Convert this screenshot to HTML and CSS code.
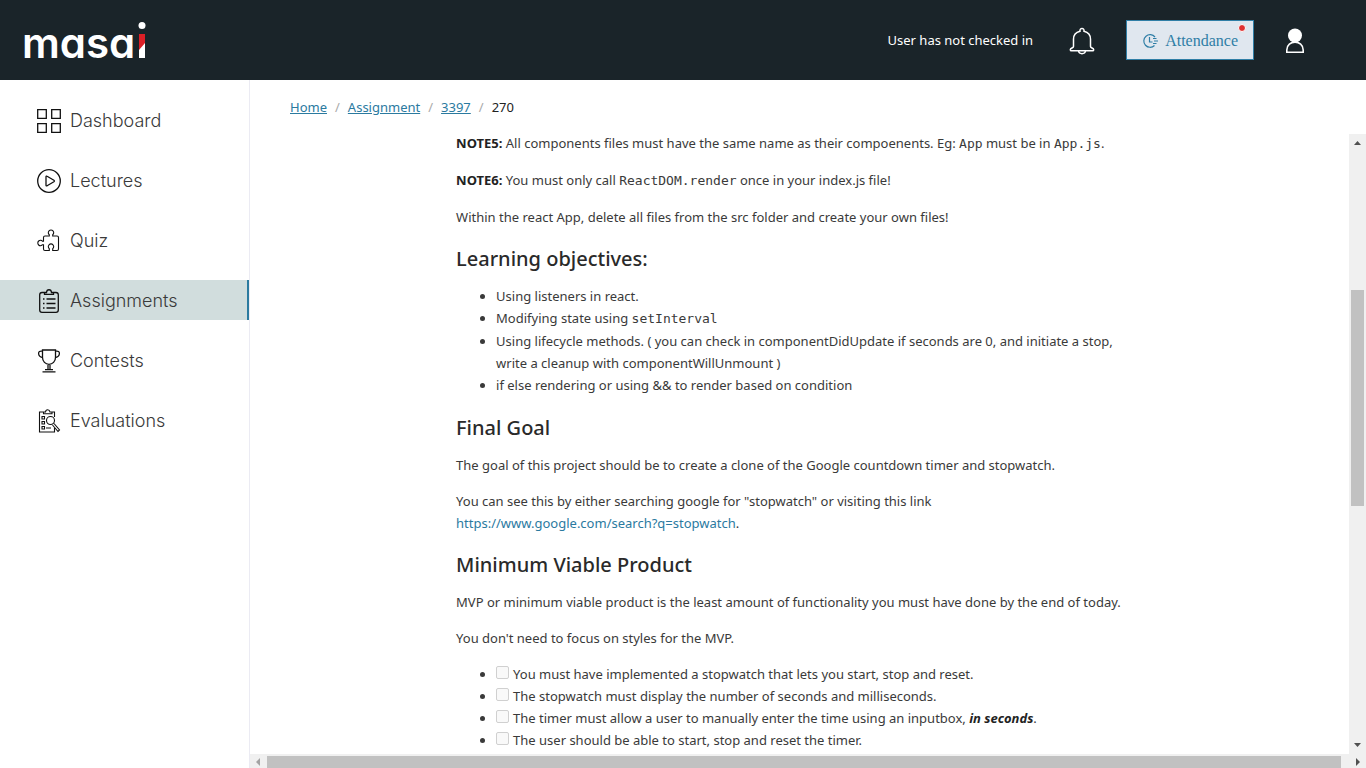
FILE: index.html
```html
<!DOCTYPE html>
<html lang="en">
<head>
<meta charset="utf-8">
<meta name="viewport" content="width=device-width, initial-scale=1">
<title>Masai - Assignment 270</title>
<link rel="stylesheet" href="styles.css">
</head>
<body class="app">
<header class="topbar">
  <a class="logo" href="#" aria-label="masai home">
    <svg width="128" height="56" viewBox="-4 -9 128 56">
      <text class="logo-text" x="-2" y="37">masa</text>
      <circle cx="118" cy="4.500" r="3.500" fill="#fff"/>
      <path d="M115 13h6v24h-6z" fill="#fff"/>
      <path d="M115 13h6v9l-6 7z" fill="#dc1f26"/>
    </svg>
  </a>
  <div class="tools">
    <span class="status">User has not checked in</span>
    <button class="icon-button bell" type="button" aria-label="Notifications">
      <svg width="26" height="28" viewBox="0 0 26 28" fill="none" stroke="#fff" stroke-width="1.500">
        <path d="M11 4.200C10.300.500 15.700.500 15 4.200c4.500 1 6.500 4.300 6.500 8v7.300c0 1.500 3.200 1.500 3.200 3.200 0 .700-.300 1.100-1.100 1.100H2.400c-.800 0-1.100-.400-1.100-1.100 0-1.700 3.200-1.700 3.200-3.200v-7.300c0-3.700 2-7 6.500-8z"/>
        <path d="M9.500 24c.600 3.600 6.400 3.600 7 0"/>
      </svg>
    </button>
    <button class="attendance" type="button">
      <svg width="16" height="16" viewBox="0 0 16 16" fill="none" stroke="#2f7ea6" stroke-width="1.200">
        <path d="M13 4A6.300 6.300 0 1 0 12.500 12.500M7.500 4v5h3M11 5.500h3.500M12 8h4M11 10.500h3.500"/>
      </svg>
      <span>Attendance</span>
      <span class="dot"></span>
    </button>
    <button class="icon-button user" type="button" aria-label="Profile">
      <svg width="20" height="26" viewBox="0 0 20 26">
        <path d="M1.800 24.200V22C1.800 11.500 18.200 11.500 18.200 22v2.200z" fill="none" stroke="#fff" stroke-width="1.600"/>
        <circle cx="10" cy="7.500" r="7" fill="#fff"/>
      </svg>
    </button>
  </div>
</header>
<div class="layout">
  <nav class="sidebar" aria-label="Main">
    <a class="nav-item" href="#"><svg class="nav-icon" viewBox="0 0 24 24"><path d="M.700.700h8.600v8.600H.700zM14.700.700h8.600v8.600h-8.600zM.700 14.700h8.600v8.600H.700zM14.700 14.700h8.600v8.600h-8.600z"/></svg>Dashboard</a>
    <a class="nav-item" href="#"><svg class="nav-icon" viewBox="0 0 24 24"><circle cx="12" cy="12" r="11.300"/><path d="M9 7.800v8.400c0 .700.500.900 1.100.600l6.800-4c.600-.400.600-1.100 0-1.500l-6.800-4c-.600-.400-1.100-.100-1.100.500z"/></svg>Lectures</a>
    <a class="nav-item" href="#"><svg class="nav-icon fine" viewBox="0 0 24 24"><path d="M8 7h4.300V5.800a2.700 2.700 0 1 1 3.400 0V7H20q1.500 0 1.500 1.500V20q0 1.500-1.500 1.500h-4.300v-1.800a2.700 2.700 0 1 0-3.400 0v1.800H8q-1.500 0-1.500-1.500v-4.300H5.600a2.700 2.700 0 1 1 0-3.400h.9V8.500Q6.500 7 8 7z"/></svg>Quiz</a>
    <a class="nav-item active" href="#" aria-current="page"><svg class="nav-icon" viewBox="0 0 24 24"><path d="M7.500 3.500H5Q2.700 3.500 2.700 5.800V21q0 2.300 2.300 2.300h14q2.300 0 2.300-2.300V5.800q0-2.300-2.300-2.300h-2.500M7.500 3.500v1.800h9V3.500h-2c-.300-3.700-4.700-3.700-5 0zM9.500 10h9M9.500 14.500h9M9.500 19h9M6 10h1.500M6 14.500h1.500M6 19h1.500"/></svg>Assignments</a>
    <a class="nav-item" href="#"><svg class="nav-icon" viewBox="0 0 24 24"><path d="M5.500 1h13v7.500c0 4-3 6.800-6.500 6.800s-6.500-2.800-6.500-6.800zM5.500 2.200C0 1 .600 7.500 5.500 8.500M18.500 2.200C24 1 23.400 7.500 18.500 8.500M11 15.200v5.300M13 15.200v5.300M8 20.600h8M5.500 22.800h13"/></svg>Contests</a>
    <a class="nav-item" href="#"><svg class="nav-icon fine" viewBox="0 0 24 24"><path d="M7 3H2.500v20h15v-4M14 3h3.500v5M6.500 4.800V3h2c.300-3 4-3 4.500 0h2v1.800zM5 7.500h2.500V10H5zM5 12.500h2.500V15H5zM5 17.500h2.500V20H5zM9 19h5M17 14.500l5.500 6.500-1.500 1.500-5.500-6.500"/><circle cx="13.500" cy="11.500" r="4"/></svg>Evaluations</a>
  </nav>
  <main class="main">
    <nav class="crumbs" aria-label="Breadcrumb">
      <a href="#">Home</a><span class="sep">/</span><a href="#">Assignment</a><span class="sep">/</span><a href="#">3397</a><span class="sep">/</span><span>270</span>
    </nav>
    <div class="viewport">
      <div class="pane">
        <article class="article">
          <p><strong>NOTE5:</strong> All components files must have the same name as their compoenents. Eg: <code>App</code> must be in <code>App.js</code>.</p>
          <p><strong>NOTE6:</strong> You must only call <code>ReactDOM.render</code> once in your index.js file!</p>
          <p>Within the react App, delete all files from the src folder and create your own files!</p>
          <h2>Learning objectives:</h2>
          <ul>
            <li>Using listeners in react.</li>
            <li>Modifying state using <code>setInterval</code></li>
            <li>Using lifecycle methods. ( you can check in componentDidUpdate if seconds are 0, and initiate a stop,<br>write a cleanup with componentWillUnmount )</li>
            <li>if else rendering or using &amp;&amp; to render based on condition</li>
          </ul>
          <h2>Final Goal</h2>
          <p>The goal of this project should be to create a clone of the Google countdown timer and stopwatch.</p>
          <p>You can see this by either searching google for "stopwatch" or visiting this link<br><a href="#">https://www.google.com/search?q=stopwatch</a>.</p>
          <h2>Minimum Viable Product</h2>
          <p>MVP or minimum viable product is the least amount of functionality you must have done by the end of today.</p>
          <p>You don't need to focus on styles for the MVP.</p>
          <ul>
            <li><input class="check" id="t1" type="checkbox" disabled><label for="t1">You must have implemented a stopwatch that lets you start, stop and reset.</label></li>
            <li><input class="check" id="t2" type="checkbox" disabled><label for="t2">The stopwatch must display the number of seconds and milliseconds.</label></li>
            <li><input class="check" id="t3" type="checkbox" disabled><label for="t3">The timer must allow a user to manually enter the time using an inputbox, <strong><em>in seconds</em></strong>.</label></li>
            <li><input class="check" id="t4" type="checkbox" disabled><label for="t4">The user should be able to start, stop and reset the timer.</label></li>
          </ul>
        </article>
      </div>
      <div class="vbar" aria-hidden="true">
        <svg class="arrow" viewBox="0 0 17 17"><path d="M5 11h7L8.500 7z"/></svg>
        <div class="before"></div><div class="thumb"></div><div class="after"></div>
        <svg class="arrow" viewBox="0 0 17 17"><path d="M5 6h7l-3.500 4z"/></svg>
      </div>
      <div class="hbar" aria-hidden="true">
        <svg class="arrow muted" viewBox="0 0 17 14"><path d="M10 4v8L6 8z"/></svg>
        <div class="thumb"></div><div class="rest"></div>
        <svg class="arrow" viewBox="0 0 17 14"><path d="M7 4v8l4-4z"/></svg>
      </div>
    </div>
  </main>
</div>
</body>
</html>
```
FILE: styles.css
```css
* { box-sizing: border-box; }
.app {
  margin: 0;
  height: 100vh;
  overflow: hidden;
  display: flex;
  flex-direction: column;
  background: #fff;
  color: #222;
  font-family: "Noto Sans", "Open Sans", sans-serif;
  font-size: 13px;
}
button { font: inherit; cursor: pointer; }
.topbar {
  flex: none;
  height: 80px;
  display: flex;
  align-items: center;
  justify-content: space-between;
  padding: 0 61px 0 20px;
  background: #1a2429;
  color: #fff;
}
.logo, .logo svg { display: block; }
.logo-text {
  font-family: Inter, sans-serif;
  font-size: 42px;
  font-weight: 600;
  font-feature-settings: "cv11";
  fill: #fff;
}
.tools { display: flex; align-items: center; }
.icon-button {
  display: flex;
  padding: 0;
  border: 0;
  background: none;
}
.bell { margin: 2px 31px 0 36px; }
.attendance {
  position: relative;
  display: flex;
  align-items: center;
  gap: 7px;
  height: 40px;
  padding: 2px 15px 0;
  border: 1px solid #2f7ea6;
  background: #e0e7ef;
  color: #2f7ea6;
  font-family: "Liberation Serif", serif;
  font-size: 16px;
}
.dot {
  position: absolute;
  top: 3px;
  right: 7px;
  width: 8px;
  height: 8px;
  border: 1px solid #fff;
  border-radius: 50%;
  background: #e03131;
}
.user { margin: 2px 0 0 31px; }
.layout { flex: 1; min-height: 0; display: flex; }
.sidebar {
  flex: none;
  width: 250px;
  padding-top: 20px;
  display: flex;
  flex-direction: column;
  gap: 20px;
  border-right: 1px solid #ebebf3;
}
.nav-item {
  height: 40px;
  display: flex;
  align-items: center;
  gap: 9px;
  padding-left: 37px;
  color: #3a3a3a;
  font-family: Inter, sans-serif;
  font-size: 18px;
  font-weight: 300;
  text-decoration: none;
}
.active { background: #d1dddd; border-right: 2px solid #2b7a9f; }
.nav-icon {
  width: 24px;
  height: 24px;
  margin-top: 2px;
  fill: none;
  stroke: #111;
  stroke-width: 1.3;
}
.fine { stroke-width: 1.1; }
.main { flex: 1; min-width: 0; display: flex; flex-direction: column; }
.crumbs {
  flex: none;
  height: 52px;
  display: flex;
  gap: 8px;
  padding: 16px 40px 0;
  line-height: 22px;
}
.crumbs a { color: #2b7a9f; }
.sep { color: #aaa; }
.viewport {
  flex: 1;
  min-height: 0;
  display: grid;
  grid-template: minmax(0, 1fr) 14px / minmax(0, 1fr) 17px;
}
.pane { overflow: hidden; }
.article {
  width: 62.5%;
  margin: 0 auto;
  line-height: 22px;
  color: #3a3a3a;
}
.article p { margin: 0 0 14px; }
.article h2 {
  margin: 17px 0 12px;
  font-size: 20px;
  font-weight: 500;
  line-height: 28px;
  color: #2a2a2a;
}
.article ul { margin: 0 0 18px; padding-left: 40px; }
.article a { color: #2b7a9f; text-decoration: none; }
.article strong { color: #222; }
.article code { font-family: "DejaVu Sans Mono", monospace; font-size: 13px; line-height: 22px; }
.check {
  appearance: none;
  width: 13px;
  height: 13px;
  margin: 0 4px 0 0;
  border: 1px solid #d0d0d0;
  border-radius: 2px;
  background: #f9f9f9;
}
.vbar {
  margin-top: 2px;
  display: flex;
  flex-direction: column;
  align-items: center;
  background: #f0f0f0;
}
.vbar .arrow { flex: none; width: 17px; height: 17px; }
.vbar .thumb { flex: 216; width: 13px; }
.before { flex: 139; }
.after { flex: 231; }
.hbar { grid-column: 1 / -1; display: flex; background: #f0f0f0; }
.hbar .arrow { flex: none; width: 17px; height: 14px; }
.hbar .thumb { flex: 1074; margin-top: 2px; }
.rest { flex: 8; }
.thumb { background: #c1c1c1; }
.arrow { fill: #505050; }
.muted { fill: #a3a3a3; }
```
